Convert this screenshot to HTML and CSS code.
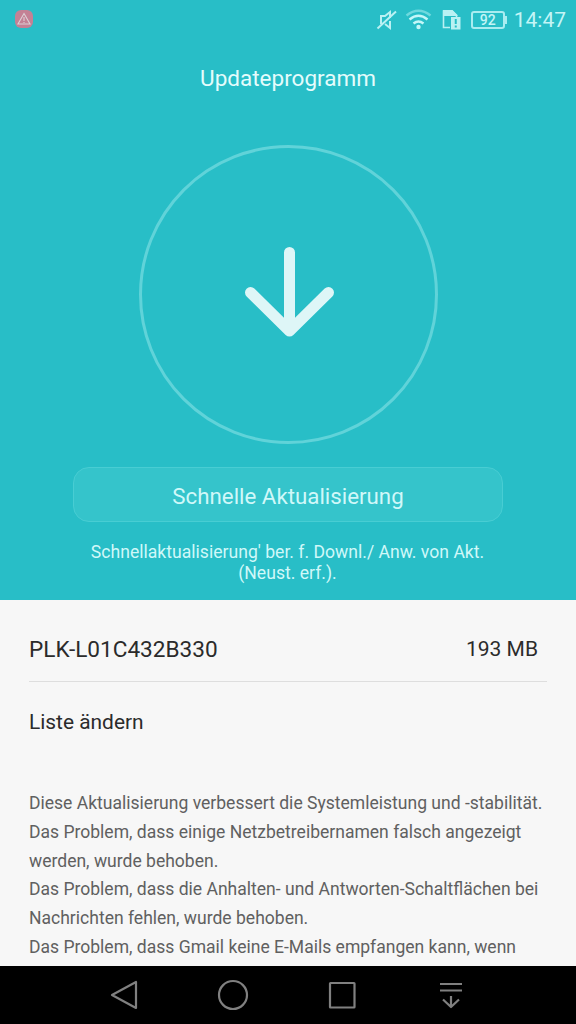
FILE: index.html
```html
<!DOCTYPE html>
<html lang="de">
<head>
    <meta charset="UTF-8">
    <meta name="viewport" content="width=device-width, initial-scale=1.0">
    <title>Updateprogramm</title>
    <link rel="stylesheet" href="styles.css">
</head>
<body>
    <div class="screen">
        <header class="hero">
            <div class="status-bar">
                <svg class="warning-icon" width="20" height="20" viewBox="0 0 20 20">
                    <rect x="1" y="0" width="18" height="18" rx="6" fill="#c48195"/>
                    <path d="M10 3.500 16 14H4ZM10 7v4M10 12v1" fill="none" stroke="#ddd0d6" stroke-width="1.100"/>
                </svg>
                <div class="status-icons">
                    <svg class="mute-icon" width="22" height="22" viewBox="0 0 22 22" fill="none" stroke="#baf1f3" stroke-width="2">
                        <path d="M6 15V7h4l5-4v6M15 12v7l-5-4"/>
                        <path d="M21 2.500 2.500 19.500" stroke-width="2"/>
                    </svg>
                    <svg class="wifi-icon" width="27" height="22" viewBox="0 0 27 22" fill="none" stroke="#c4f7f8" stroke-width="2.400">
                        <path d="M1.500 6.500q12-9.500 24 0" stroke="#6ed9de"/>
                        <path d="M4.500 10.500q9-7.500 18 0M8.500 14.500q5-4 10 0"/>
                        <circle cx="13.500" cy="18" r="2.200" fill="#c4f7f8" stroke="none"/>
                    </svg>
                    <svg class="sim-icon" width="20" height="22" viewBox="0 0 20 22">
                        <path d="M8 18.500H1.500V2H10l4.500 4.500V8" fill="none" stroke="#baf1f3" stroke-width="1.600"/>
                        <path d="M1 1h9.500l5 5v1H1z" fill="#baf1f3"/>
                        <path d="M9 8h9.500v12.500H9z" fill="#baf1f3"/>
                        <path d="M13.750 10v5M13.750 16.500v2" stroke="#28bec7" stroke-width="2"/>
                    </svg>
                    <div class="battery">92</div>
                    <span class="clock">14:47</span>
                </div>
            </div>
            <h1>Updateprogramm</h1>
            <div class="circle">
                <svg width="92" height="92" viewBox="0 0 92 92" fill="none" stroke="#def6f7" stroke-width="11" stroke-linecap="round" stroke-linejoin="round">
                    <path d="M45.500 6.500V84M6.500 46.500l39 38.500 39-38.500"/>
                </svg>
            </div>
            <button class="update-button">Schnelle Aktualisierung</button>
            <p class="hint">Schnellaktualisierung' ber. f. Downl./ Anw. von Akt.<br>(Neust. erf.).</p>
        </header>

        <main class="details">
            <div class="version-row">
                <span class="version">PLK-L01C432B330</span>
                <span class="size">193 MB</span>
            </div>
            <h2>Liste ändern</h2>
            <div class="changes">
                <p>Diese Aktualisierung verbessert die Systemleistung und -stabilität.</p>
                <p>Das Problem, dass einige Netzbetreibernamen falsch angezeigt<br>werden, wurde behoben.</p>
                <p>Das Problem, dass die Anhalten- und Antworten-Schaltflächen bei<br>Nachrichten fehlen, wurde behoben.</p>
                <p>Das Problem, dass Gmail keine E-Mails empfangen kann, wenn</p>
            </div>
        </main>

        <nav class="nav-bar">
            <svg width="32" height="32" viewBox="0 0 32 32"><path d="M28 3v26L4 16Z"/></svg>
            <svg width="32" height="32" viewBox="0 0 32 32"><circle cx="16" cy="16" r="14"/></svg>
            <svg width="32" height="32" viewBox="0 0 32 32"><rect x="4" y="4" width="24.500" height="24.500" rx=".5"/></svg>
            <svg width="32" height="32" viewBox="0 0 32 32"><path d="M5 5h22M5 11.500h22M16 17v11M8 20.500l8 7.500 8-7.500"/></svg>
        </nav>
    </div>
</body>
</html>
```

FILE: styles.css
```css
* {
    box-sizing: border-box;
}
body {
    margin: 0;
    font-family: Roboto, "Liberation Sans", sans-serif;
    background-color: #000;
}
h1, h2, p {
    margin: 0;
    font-weight: 400;
}
svg {
    display: block;
}
.screen {
    display: flex;
    flex-direction: column;
    width: 576px;
    height: 1024px;
    overflow: hidden;
}
.hero {
    display: flex;
    flex-direction: column;
    align-items: center;
    height: 600px;
    background-color: #28bec7;
}
.status-bar {
    display: flex;
    justify-content: space-between;
    align-items: center;
    width: 100%;
    height: 40px;
    padding: 0 10px 0 14px;
}
.status-icons {
    display: flex;
    align-items: center;
    color: #c4f5f6;
}
.wifi-icon {
    margin-left: 8px;
}
.sim-icon {
    margin-left: 10px;
}
.battery {
    position: relative;
    width: 34px;
    height: 18px;
    margin-left: 9px;
    border: 2px solid #a9edf0;
    border-radius: 3px;
    font-size: 14px;
    font-weight: 500;
    line-height: 15px;
    text-align: center;
}
.battery::after {
    content: "";
    position: absolute;
    top: 3px;
    right: -4px;
    width: 2px;
    height: 8px;
    background-color: #a9edf0;
}
.clock {
    margin-left: 9px;
    font-size: 21px;
    line-height: 24px;
}
h1 {
    margin-top: 24px;
    font-size: 22.5px;
    line-height: 28px;
    color: #e4fcfc;
}
.circle {
    display: flex;
    justify-content: center;
    width: 299px;
    height: 299px;
    margin-top: 53px;
    padding: 98px 0 0 3px;
    border: 3px solid #60d3d9;
    border-radius: 50%;
}
.update-button {
    width: 430px;
    height: 55px;
    margin-top: 23px;
    padding: 3px 0 0;
    border: 1px solid #48cdd3;
    border-radius: 16px;
    background-color: #35c4cb;
    font-family: inherit;
    font-size: 22.3px;
    color: #d0f8f9;
}
.hint {
    margin: 20px 1px 0 0;
    font-size: 17.6px;
    line-height: 21px;
    text-align: center;
    color: #d0f8f9;
}
.details {
    height: 366px;
    padding: 0 29px;
    overflow: hidden;
    background-color: #f7f7f7;
    color: #2b2b2b;
}
.version-row {
    display: flex;
    justify-content: space-between;
    align-items: center;
    height: 82px;
    padding: 17px 9px 0 0;
    border-bottom: 1px solid #dedede;
}
.version {
    font-size: 22.6px;
}
.size {
    font-size: 21px;
}
h2 {
    margin-top: 27px;
    font-size: 20.9px;
    line-height: 26px;
}
.changes {
    margin-top: 54px;
    font-size: 17.55px;
    line-height: 28.8px;
    white-space: nowrap;
    color: #606060;
}
.nav-bar {
    display: flex;
    justify-content: center;
    align-items: center;
    gap: 77px;
    height: 58px;
    padding-right: 1px;
    background-color: #000;
}
.nav-bar svg {
    fill: none;
    stroke: #808080;
    stroke-width: 2.2;
    stroke-linejoin: round;
}
```
